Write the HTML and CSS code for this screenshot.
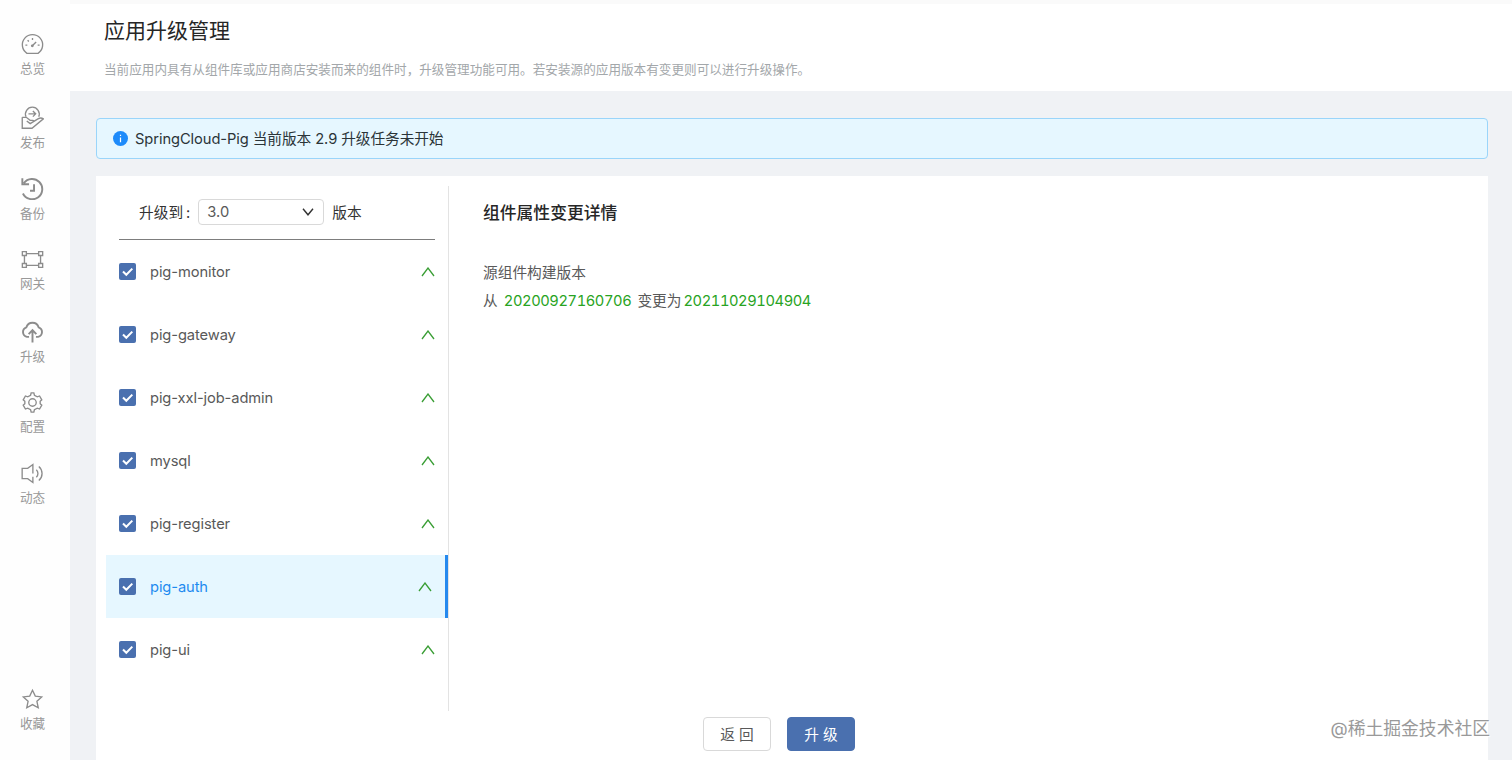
FILE: index.html
```html
<!DOCTYPE html>
<html lang="zh-CN">
<head>
    <meta charset="UTF-8">
    <meta name="viewport" content="width=device-width, initial-scale=1.0">
    <title>应用升级管理</title>
    <link rel="stylesheet" href="styles.css">
</head>
<body>

    <!-- Sidebar -->
    <nav class="sidebar">
        <a class="nav-item">
            <svg class="nav-icon" viewBox="0 0 24 24"><path d="M6.2 21.2A10.600 10.600 0 1 1 17.800 21.200z"/><path d="M11.800 13.400l4-4M12 5.200v2M4.600 12.600h2M17.400 12.600h2M6.900 7.600l1.300 1.300"/><circle cx="11.800" cy="13.400" r=".8"/></svg>
            <span>总览</span>
        </a>
        <a class="nav-item low">
            <svg class="nav-icon" viewBox="0 0 24 24"><path d="M5.200 11.200a7.200 7.200 0 1 1 13.300 0"/><path d="M7.800 8.200h7.400M12.400 5.300l2.900 2.900-2.900 2.900"/><path d="M1.300 11.800v11.400h10.200L23.300 13.400c-1.800-1.200-4-.9-5.600 0L9.600 18.400 6 15.600M1.300 11.800h4.200l4 3.200h2.800c1 .2 1.400.8 1.200 1.400"/></svg>
            <span>发布</span>
        </a>
        <a class="nav-item low">
            <svg class="nav-icon bold" viewBox="0 0 24 24"><path d="M2 17.200A10.600 10.600 0 1 0 3 6.400M1.400 1.200v6.400h7"/><path d="M13.600 7.600v6.800H9.400"/></svg>
            <span>备份</span>
        </a>
        <a class="nav-item">
            <svg class="nav-icon" viewBox="0 0 24 24"><path d="M5.600 5.800h12.800M5.600 18.200h12.800M3.600 7.800v8.400M20.400 7.800v8.400"/><path d="M1.400 3.800h4.200v4H1.400zM18.400 3.800h4.200v4h-4.200zM1.400 16.200h4.200v4H1.400zM18.400 16.200h4.200v4h-4.200z"/></svg>
            <span>网关</span>
        </a>
        <a class="nav-item low">
            <svg class="nav-icon bold" viewBox="0 0 24 24"><path d="M8.400 17.600H6.200a5.200 5.200 0 0 1-.6-10 6.700 6.700 0 0 1 12.800 0 5.200 5.200 0 0 1-.6 10h-2.200"/><path d="M12 23.400V10.800M8 14.800l4-4.200 4 4.200"/></svg>
            <span>升级</span>
        </a>
        <a class="nav-item">
            <svg class="nav-icon" viewBox="0 0 24 24"><path d="M10 4.400 10.600 2h2.800l.6 2.400 3 1.700 2.400-.9 2.300 4-1.700 1.600v2.400l1.700 1.600-2.300 4-2.400-.9-3 1.700-.6 2.400h-2.800l-.6-2.400-3-1.700-2.400.9-2.300-4L4 13.200v-2.400L2.300 9.200l2.300-4 2.400.9z"/><circle cx="12" cy="12" r="3.900"/></svg>
            <span>配置</span>
        </a>
        <a class="nav-item">
            <svg class="nav-icon" viewBox="0 0 24 24"><path d="M12.400 12V2.600L7 6.600H1.200v10.800H7l5.400 4v-6M16 8.200a5.400 5.400 0 0 1 0 7.800M18.600 4.600a9.800 9.800 0 0 1 0 14.800"/></svg>
            <span>动态</span>
        </a>
        <a class="nav-item favorite">
            <svg class="nav-icon" viewBox="0 0 24 24"><path d="M12 2.400l2.900 6.100 6.700.8-5 4.600 1.400 6.700-6-3.300-6 3.300 1.400-6.700-5-4.600 6.700-.8z"/></svg>
            <span>收藏</span>
        </a>
    </nav>

    <div class="main">
        <!-- Page header -->
        <header class="page-header">
            <h1>应用升级管理</h1>
            <p>当前应用内具有从组件库或应用商店安装而来的组件时，升级管理功能可用。若安装源的应用版本有变更则可以进行升级操作。</p>
        </header>

        <div class="alert">
            <svg class="alert-icon" viewBox="0 0 16 16"><circle cx="8" cy="8" r="8"/><path d="M8 7v5M8 4v1.4"/></svg>
            <span>SpringCloud-Pig 当前版本 2.9 升级任务未开始</span>
        </div>

        <div class="panel">
            <div class="columns">
                <!-- Component list -->
                <div class="component-col">
                    <div class="version-row">
                        <span>升级到<i>:</i></span>
                        <div class="select">
                            <span>3.0</span>
                            <svg viewBox="0 0 12 8"><path d="M1 .8l5 6 5-6"/></svg>
                        </div>
                        <span>版本</span>
                    </div>
                    <div class="component">
                        <svg class="checkbox" viewBox="0 0 17 17"><path d="M4 8.5l3.3 3.3 6-6.2"/></svg>
                        <span>pig-monitor</span>
                        <svg class="arrow" viewBox="0 0 14 10"><path d="M1 9l6-8 6 8"/></svg>
                    </div>
                    <div class="component">
                        <svg class="checkbox" viewBox="0 0 17 17"><path d="M4 8.5l3.3 3.3 6-6.2"/></svg>
                        <span>pig-gateway</span>
                        <svg class="arrow" viewBox="0 0 14 10"><path d="M1 9l6-8 6 8"/></svg>
                    </div>
                    <div class="component">
                        <svg class="checkbox" viewBox="0 0 17 17"><path d="M4 8.5l3.3 3.3 6-6.2"/></svg>
                        <span>pig-xxl-job-admin</span>
                        <svg class="arrow" viewBox="0 0 14 10"><path d="M1 9l6-8 6 8"/></svg>
                    </div>
                    <div class="component">
                        <svg class="checkbox" viewBox="0 0 17 17"><path d="M4 8.5l3.3 3.3 6-6.2"/></svg>
                        <span>mysql</span>
                        <svg class="arrow" viewBox="0 0 14 10"><path d="M1 9l6-8 6 8"/></svg>
                    </div>
                    <div class="component">
                        <svg class="checkbox" viewBox="0 0 17 17"><path d="M4 8.5l3.3 3.3 6-6.2"/></svg>
                        <span>pig-register</span>
                        <svg class="arrow" viewBox="0 0 14 10"><path d="M1 9l6-8 6 8"/></svg>
                    </div>
                    <div class="component active">
                        <svg class="checkbox" viewBox="0 0 17 17"><path d="M4 8.5l3.3 3.3 6-6.2"/></svg>
                        <span>pig-auth</span>
                        <svg class="arrow" viewBox="0 0 14 10"><path d="M1 9l6-8 6 8"/></svg>
                    </div>
                    <div class="component">
                        <svg class="checkbox" viewBox="0 0 17 17"><path d="M4 8.5l3.3 3.3 6-6.2"/></svg>
                        <span>pig-ui</span>
                        <svg class="arrow" viewBox="0 0 14 10"><path d="M1 9l6-8 6 8"/></svg>
                    </div>
                </div>

                <!-- Change details -->
                <div class="detail-col">
                    <h2>组件属性变更详情</h2>
                    <p>源组件构建版本</p>
                    <p>从 <b class="from">20200927160706</b> 变更为<b>20211029104904</b></p>
                </div>
            </div>

            <div class="actions">
                <button class="btn">返 回</button>
                <button class="btn primary">升 级</button>
            </div>
        </div>
    </div>

    <div class="watermark">@稀土掘金技术社区</div>

</body>
</html>
```
FILE: styles.css
```css
/* General Styles */
* {
    box-sizing: border-box;
}

body {
    margin: 0;
    height: 760px;
    display: flex;
    overflow: hidden;
    font-family: Inter, "Noto Sans CJK SC", sans-serif;
    font-size: 14.7px;
    color: #595959;
    background: #f0f2f5;
}

h1, h2, p {
    margin: 0;
    font-weight: 400;
}

svg {
    display: block;
    fill: none;
    flex-shrink: 0;
}

/* Sidebar */
.sidebar {
    width: 70px;
    padding: 33px 5px 24px 0;
    display: flex;
    flex-direction: column;
    background: #fefefe;
}

.nav-item {
    height: 71.5px;
    flex-shrink: 0;
    display: flex;
    flex-direction: column;
    align-items: center;
    font-size: 12.6px;
    line-height: 18px;
    color: #999;
}

.nav-item span {
    margin-top: 4px;
}

.nav-item.low span {
    margin-top: 5px;
}

.nav-icon {
    width: 23px;
    height: 23px;
    stroke: #8c8c8c;
    stroke-width: 1.4;
}

.nav-item.low .nav-icon {
    margin-top: 1px;
}

.nav-icon.bold {
    stroke-width: 2;
}

.favorite {
    margin-top: auto;
    height: 48px;
}

/* Main */
.main {
    flex: 1;
    display: flex;
    flex-direction: column;
}

.page-header {
    height: 91px;
    padding: 14px 34px 0;
    border-top: 4px solid #fafafa;
    background: #fff;
}

.page-header h1 {
    font-size: 21px;
    line-height: 25px;
    color: #262626;
}

.page-header p {
    margin-top: 17px;
    font-size: 12.62px;
    line-height: 20px;
    color: #a3a7aa;
}

.alert {
    height: 41px;
    margin: 27px 24px 0 26px;
    padding: 0 0 0 16px;
    display: flex;
    align-items: center;
    border: 1px solid #9ad5fa;
    border-radius: 4px;
    background: #e6f7ff;
    color: #2b3438;
    letter-spacing: -0.08px;
}

.alert span {
    padding-bottom: 2px;
}

.alert-icon {
    width: 15px;
    height: 15px;
    margin-right: 7px;
    fill: #1e8bfa;
    stroke: #fff;
    stroke-width: 1.3;
}

.alert-icon circle {
    stroke: none;
}

.panel {
    flex: 1;
    margin: 17px 24px 0 26px;
    padding-top: 10px;
    background: #fff;
}

.columns {
    height: 525px;
    display: flex;
}

/* Component list */
.component-col {
    width: 343px;
    margin-left: 10px;
    border-right: 1px solid #e3e3e3;
}

.version-row {
    height: 54px;
    margin: 0 13px;
    padding: 0 0 1px 20px;
    display: flex;
    align-items: center;
    border-bottom: 1px solid #7d7d7d;
    color: #333;
}

.version-row > span {
    padding-bottom: 2px;
}

.version-row i {
    margin-left: 3px;
    font-style: normal;
}

.select {
    width: 126px;
    height: 26px;
    margin: 0 8px;
    padding: 0 9px 0 8px;
    display: flex;
    align-items: center;
    justify-content: space-between;
    border: 1px solid #d9d9d9;
    border-radius: 4px;
    color: #595959;
}

.select svg {
    width: 12px;
    height: 8px;
    stroke: #333;
    stroke-width: 1.4;
}

.component {
    height: 63px;
    padding: 0 13px;
    display: flex;
    align-items: center;
    letter-spacing: -0.1px;
}

.component span {
    flex: 1;
    margin-left: 14px;
}

.component.active {
    border-right: 3px solid #2589ee;
    background: #e6f7ff;
    color: #1e8bf0;
}

.checkbox {
    width: 17px;
    height: 17px;
    border-radius: 2px;
    background: #4a70af;
    stroke: #fff;
    stroke-width: 2;
}

.arrow {
    width: 14px;
    height: 10px;
    stroke: #3a9e35;
    stroke-width: 1.3;
}

/* Change details */
.detail-col {
    padding: 14px 34px;
}

.detail-col h2 {
    margin-bottom: 34px;
    font-size: 16.8px;
    line-height: 26px;
    font-weight: 500;
    color: #262626;
}

.detail-col p {
    line-height: 27.5px;
}

.detail-col b {
    margin-left: 2px;
    font-weight: 400;
    font-variant-numeric: tabular-nums;
    letter-spacing: -0.42px;
    color: #28a322;
}

.detail-col .from {
    margin-right: 2px;
}

/* Buttons */
.actions {
    margin-top: 6px;
    padding-right: 26px;
    display: flex;
    justify-content: center;
    gap: 16px;
}

.btn {
    width: 68px;
    height: 34px;
    padding: 0 0 2px;
    border: 1px solid #d9d9d9;
    border-radius: 4px;
    background: #fff;
    color: #595959;
    font-family: inherit;
    font-size: 14.7px;
}

.btn.primary {
    border-color: #4a70af;
    background: #4a70af;
    color: #fff;
}

.watermark {
    position: absolute;
    right: 22px;
    bottom: 18px;
    font-size: 17.8px;
    line-height: 26px;
    color: #999;
    text-shadow: 1px 1px 1px #fff;
}
```
